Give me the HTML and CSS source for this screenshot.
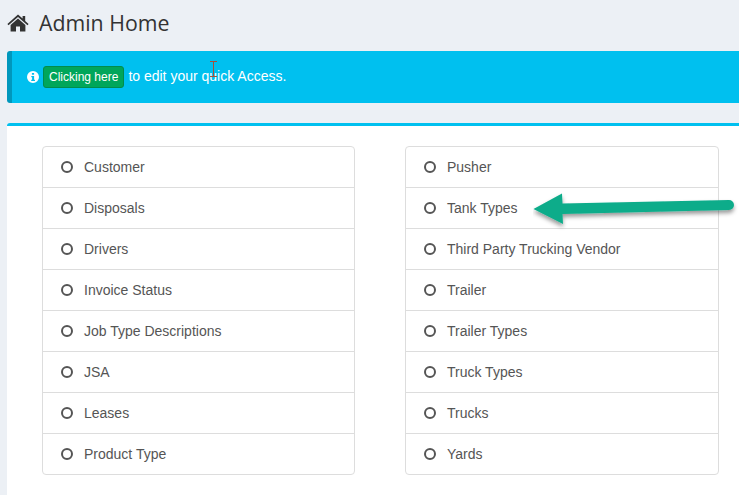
FILE: index.html
```html
<!DOCTYPE html>
<html lang="en">
<head>
<meta charset="utf-8">
<title>Admin Home</title>
<link rel="stylesheet" href="styles.css">
</head>
<body>
<div class="page">
  <h1 class="title">
    <svg class="home" viewBox="0 0 22 18" aria-hidden="true"><path d="M11 0.6 L15.6 4.6 V2 H18.2 V6.9 L21.6 9.9 L20.5 11.2 L11 2.9 L1.5 11.2 L0.4 9.9 Z M3.6 11 L11 4.5 L18.4 11 V17.6 H13 V12.4 H9 V17.6 H3.6 Z"/></svg>
    <span>Admin Home</span>
  </h1>
  <div class="alert">
    <svg class="info" viewBox="0 0 12 12" aria-hidden="true"><path fill-rule="evenodd" d="M6 0a6 6 0 1 0 0 12A6 6 0 0 0 6 0ZM4.9 1.9h2.2v1.8H4.9ZM4.3 4.9h2.8v3.9h.9v1.3H4.2V8.8h.9V6.2h-.8Z"/></svg>
    <a class="btn">Clicking here</a>
    <span class="msg">to edit your quick Access.</span>
    <svg class="cursor" viewBox="0 0 7 16" aria-hidden="true"><path d="M0 .5H7M3.5 .5V15.5M0 15.5H7"/></svg>
  </div>
  <div class="box">
    <ul class="list">
      <li><i class="dot"></i>Customer</li>
      <li><i class="dot"></i>Disposals</li>
      <li><i class="dot"></i>Drivers</li>
      <li><i class="dot"></i>Invoice Status</li>
      <li><i class="dot"></i>Job Type Descriptions</li>
      <li><i class="dot"></i>JSA</li>
      <li><i class="dot"></i>Leases</li>
      <li><i class="dot"></i>Product Type</li>
    </ul>
    <ul class="list">
      <li><i class="dot"></i>Pusher</li>
      <li><i class="dot"></i>Tank Types</li>
      <li><i class="dot"></i>Third Party Trucking Vendor</li>
      <li><i class="dot"></i>Trailer</li>
      <li><i class="dot"></i>Trailer Types</li>
      <li><i class="dot"></i>Truck Types</li>
      <li><i class="dot"></i>Trucks</li>
      <li><i class="dot"></i>Yards</li>
    </ul>
    <svg class="arrow" viewBox="0 0 210 56" aria-hidden="true">
      <defs><filter id="sh" x="-10%" y="-30%" width="120%" height="170%"><feDropShadow dx="0" dy="3" stdDeviation="2.2" flood-color="#000" flood-opacity=".4"/></filter></defs>
      <path filter="url(#sh)" d="M0.5 31 L29 15.5 L29.5 25.5 L196 22 A5 5 0 0 1 196 32 L29.5 36 L30 46 Z"/>
    </svg>
  </div>
</div>
</body>
</html>
```

FILE: styles.css
```css
html, body {
  margin: 0;
  height: 100%;
}
body {
  background: #ecf0f5;
  font-family: "Liberation Sans", Arial, sans-serif;
  overflow: hidden;
}
.page {
  padding: 0 0 0 7px;
}
.title {
  display: flex;
  align-items: center;
  gap: 10px;
  height: 51px;
  margin: 0;
  padding: 0 0 6px 0;
  box-sizing: border-box;
  font-family: "Open Sans", sans-serif;
  font-weight: 400;
  font-size: 21.3px;
  color: #333;
}
.home {
  width: 22px;
  height: 18px;
  fill: #333;
}
.alert {
  position: relative;
  display: flex;
  align-items: center;
  height: 52px;
  margin-right: -10px;
  padding-left: 15px;
  box-sizing: border-box;
  background: #00c0ef;
  border-left: 5px solid #0097bc;
  border-radius: 3px;
  color: #fff;
  font-size: 14px;
}
.info {
  width: 12px;
  height: 12px;
  fill: #fff;
  margin-right: 4px;
}
.btn {
  display: block;
  padding: 3px 5px;
  margin-right: 4px;
  height: 22px;
  box-sizing: border-box;
  background: #00a65a;
  border: 1px solid #008d4c;
  border-radius: 3px;
  font-size: 12px;
  line-height: 15px;
  color: #fff;
}
.msg {
  margin-bottom: 2px;
}
.cursor {
  position: absolute;
  left: 198px;
  top: 10px;
  width: 7px;
  height: 16px;
  fill: none;
  stroke: #a8503a;
  stroke-width: 1;
}
.box {
  position: relative;
  display: flex;
  gap: 50px;
  margin-top: 20px;
  margin-right: -10px;
  height: 380px;
  padding: 20px 0 0 35px;
  box-sizing: border-box;
  background: #fff;
  border-top: 3px solid #00c0ef;
  border-radius: 3px 3px 0 0;
}
.list {
  list-style: none;
  width: 313px;
  margin: 0;
  padding: 0;
  height: 329px;
  box-sizing: border-box;
  border: 1px solid #ddd;
  border-radius: 4px;
  font-size: 14px;
  color: #555;
}
.list + .list {
  width: 314px;
}
.list li {
  display: flex;
  align-items: center;
  height: 41px;
  padding-left: 18px;
  box-sizing: border-box;
  border-top: 1px solid #ddd;
}
.list li:first-child {
  height: 40px;
  border-top: 0;
}
.dot {
  width: 12px;
  height: 12px;
  margin-right: 11px;
  box-sizing: border-box;
  border: 2px solid #555;
  border-radius: 50%;
}
.arrow {
  position: absolute;
  left: 526px;
  top: 52px;
  width: 210px;
  height: 56px;
  fill: #0bac8a;
}
```
